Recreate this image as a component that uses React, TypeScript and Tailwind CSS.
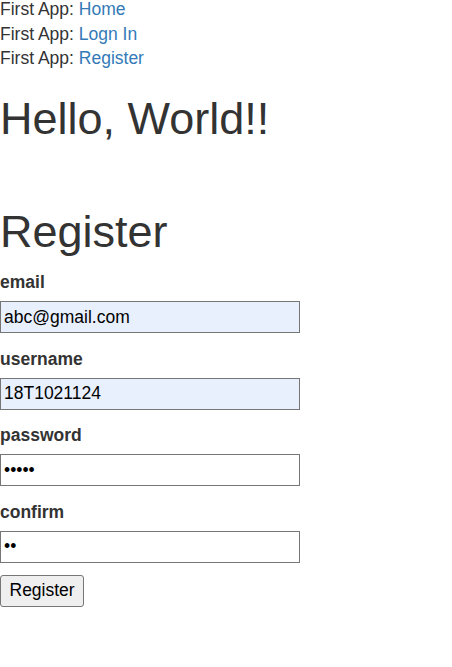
export default function App() {
  const fields = [
    { label: "email", type: "text", value: "abc@gmail.com", filled: true },
    { label: "username", type: "text", value: "18T1021124", filled: true },
    { label: "password", type: "password", value: "12345", filled: false },
    { label: "confirm", type: "password", value: "12", filled: false },
  ];

  return (
    <div className="min-h-screen bg-white font-['Liberation_Sans',Arial,sans-serif] text-[17.5px] leading-[24.5px] text-[#333]">
      {/* Nav links */}
      <div className="-mt-[3px]">
        <div>
          First App: <a className="text-[#337ab7]">Home</a>
        </div>
        <div>
          First App: <a className="text-[#337ab7]">Logn In</a>
        </div>
        <div>
          First App: <a className="text-[#337ab7]">Register</a>
        </div>
      </div>

      <h1 className="mt-[23px] text-[45px] leading-[49.5px]">Hello, World!!</h1>

      <h1 className="mt-[64px] text-[45px] leading-[49.5px]">Register</h1>

      <form className="mt-[13.5px]" onSubmit={(e) => e.preventDefault()}>
        {fields.map((f) => (
          <div key={f.label} className="mb-[13.5px]">
            <label className="mb-[6px] block font-bold leading-[25px]">
              {f.label}
            </label>
            <input
              type={f.type}
              defaultValue={f.value}
              className={`h-[32px] w-[300px] border border-[#767676] px-[3px] text-[17.5px] text-black outline-none ${
                f.filled ? "bg-[#e8f0fe]" : "bg-white"
              }`}
            />
          </div>
        ))}
        <button
          type="submit"
          className="-mt-[1.5px] h-[32px] rounded-[3px] border border-[#767676] bg-[#efefef] px-[8.5px] text-[17.5px] text-black"
        >
          Register
        </button>
      </form>
    </div>
  );
}
